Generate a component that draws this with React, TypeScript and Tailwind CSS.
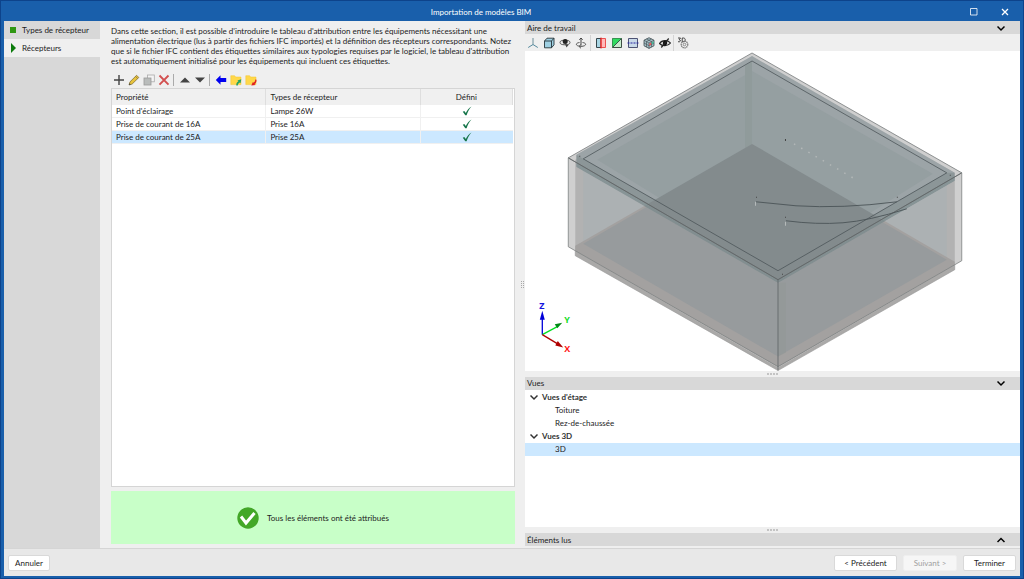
import { useState } from "react";
import type { ReactNode } from "react";

const PROPERTIES = [
  { name: "Point d'éclairage", type: "Lampe 26W" },
  { name: "Prise de courant de 16A", type: "Prise 16A" },
  { name: "Prise de courant de 25A", type: "Prise 25A" },
];

function Icon({ children }: { children: ReactNode }) {
  return (
    <svg viewBox="0 0 12 12" className="size-3" fill="none" aria-hidden="true">
      {children}
    </svg>
  );
}

function ToolButton({ label, compact = false, children }: { label: string; compact?: boolean; children: ReactNode }) {
  return (
    <button
      type="button"
      aria-label={label}
      className={`flex h-4 shrink-0 items-center justify-center ${compact ? "w-[15px]" : "w-4"}`}
    >
      <Icon>{children}</Icon>
    </button>
  );
}

function Folder() {
  return <path d="M.8 1.700h3.800l1 1.300h5.400v7.600H.8z" fill="#ffd84a" stroke="#f2c42e" strokeWidth=".5" />;
}

function EditToolbar() {
  return (
    <div className="flex h-4 items-center">
      <ToolButton compact label="Ajouter">
        <path d="M6 1v10M1 6h10" stroke="#444" strokeWidth="1.4" />
      </ToolButton>
      <ToolButton compact label="Modifier">
        <path d="M1 11l1-3.2L8.600 1.300l2.200 2.200L4.200 10z" fill="#e8c33c" stroke="#776429" strokeWidth=".7" />
        <path d="M1 11l.5-1.800 1.400 1.300z" fill="#444" />
        <path d="M7.500 2.400l2.200 2.200" stroke="#8a7540" strokeWidth=".8" />
      </ToolButton>
      <ToolButton compact label="Copier">
        <rect x="4.500" y="1" width="6.800" height="6.800" fill="#f4f4f4" stroke="#aaa" strokeWidth=".8" />
        <rect x="1" y="4" width="7" height="7" fill="#b9bcbb" stroke="#999" strokeWidth=".8" />
      </ToolButton>
      <ToolButton compact label="Supprimer">
        <path d="M1.500 1.500l9 9.200M10.500 1.500l-9 9.200" stroke="#d25050" strokeWidth="1.900" />
      </ToolButton>
      <span className="mr-[3px] ml-0.5 h-3 w-px bg-[#aaa]" />
      <ToolButton compact label="Monter">
        <path d="M1 8.500L6 3.500l5 5z" fill="#444" />
      </ToolButton>
      <ToolButton compact label="Descendre">
        <path d="M1 3.500h10l-5 5z" fill="#444" />
      </ToolButton>
      <span className="mr-[3px] ml-0.5 h-3 w-px bg-[#aaa]" />
      <ToolButton compact label="Attribuer">
        <path d="M.8 6l4.700-4.800v2.900h5.700v3.800H5.500v2.900z" fill="#0000f0" />
      </ToolButton>
      <ToolButton compact label="Importer">
        <Folder />
        <path d="M11.300 5.200L7.400 6.600l1 .7C6.800 8.300 6 9.700 6.300 11.500h1.500c0-1.400.6-2.300 1.900-3.100l.8.900z" fill="#21a366" />
      </ToolButton>
      <ToolButton compact label="Exporter">
        <Folder />
        <path d="M10.200 5.500l1.300.3c.1 2-.6 3.400-2 4.300l.8.900-4 .6 1.600-3.700.8.900c1.100-.8 1.600-1.800 1.500-3.300z" fill="#e02020" />
      </ToolButton>
    </div>
  );
}

function ViewToolbar() {
  return (
    <div className="flex h-[17px] shrink-0 items-center bg-[#efefef]">
      <ToolButton label="Axes">
        <path d="M6 1v6.500" stroke="#6d8f9a" />
        <path d="M6 7.500l-4.800 3M6 7.500l4.800 3" stroke="#54899d" />
      </ToolButton>
      <ToolButton label="Vue en perspective">
        <path d="M1.500 4L4 1.200h7v6.600L8.500 10.800h-7z" fill="#9fd0e2" stroke="#26343a" strokeWidth=".9" />
        <path d="M1.500 4h7v6.800M8.500 4L11 1.200" stroke="#26343a" strokeWidth=".9" />
      </ToolButton>
      <ToolButton label="Orbite">
        <ellipse cx="6" cy="5.500" rx="5" ry="2.300" stroke="#555" />
        <circle cx="6.200" cy="4.600" r="2.500" fill="#222" />
        <path d="M6 7l3.500 1-2 2.600z" fill="#444" />
      </ToolButton>
      <ToolButton label="Rotation">
        <path d="M6 1v7.500M4.300 2.700L6 1l1.700 1.700" stroke="#444" />
        <path d="M4.500 5.500C0 6 .2 9.200 6 9.400c5.800-.2 6-3.400 1.500-3.900M6 7.500L4 9.400 6 11.300" stroke="#555" />
      </ToolButton>
      <span className="mr-0.5 ml-px h-4 w-px bg-[#d4d4d4]" />
      <ToolButton label="Section">
        <path d="M1.500 1.500H6v9H1.500z" fill="#a9d6e4" stroke="#36464c" />
        <path d="M6 1.500h4.500v9H6z" fill="#ffb9b9" stroke="#ed5050" />
        <path d="M6 .5v11" stroke="#e51d1d" />
      </ToolButton>
      <ToolButton label="Surface">
        <path d="M1.500 1.500h9v9h-9z" fill="#c8eccd" stroke="#3e4f44" />
        <path d="M1.500 1.500h9l-9 9z" fill="#31db60" />
        <path d="M1.500 10.500l9-9" stroke="#37554a" />
      </ToolButton>
      <ToolButton label="Plan">
        <path d="M1.500 1.500h9v9h-9z" fill="#c9d9e9" stroke="#4d5374" />
        <path d="M.5 6h11" stroke="#2525a0" strokeDasharray="2 1" />
      </ToolButton>
      <ToolButton label="Maillage">
        <path d="M6 .7l5 2.500v5.600L6 11.400 1 8.800V3.200z" fill="#a4bec5" stroke="#3f4c50" strokeWidth=".8" />
        <path d="M1 3.200L6 6l5-2.800M6 6v5.400M3.500 1.900l5 2.700v5.500M8.500 1.900l-5 2.700v5.500M1 6l5 2.700L11 6" stroke="#3f4c50" strokeWidth=".6" />
        <path d="M6.300 6.600l1.900-1v2.200l-1.900 1z" fill="#e55" />
        <path d="M8.800 5.200l1.900-1v2.100l-1.900 1z" fill="#4b9" />
      </ToolButton>
      <ToolButton label="Masquer">
        <path d="M.5 6.500C3 2.700 9 2.700 11.500 6 9 9.500 3 9.500.5 6.500z" fill="#ddd" stroke="#222" strokeWidth="1.200" />
        <circle cx="6" cy="6" r="2.200" fill="#111" />
        <path d="M2.300 10.500l7.400-9" stroke="#222" strokeWidth="1.200" />
      </ToolButton>
      <span className="mr-px h-4 w-px bg-[#d4d4d4]" />
      <ToolButton label="Options 3D">
        <path d="M1 1h2.500L2.200 2.800c2.100.1 1.400 2.600-1.200 1.900M5.200 1h1.300c2.300 0 2.300 3.700 0 3.700H5.200z" stroke="#333" strokeWidth=".9" />
        <circle cx="7.500" cy="7.500" r="3.300" stroke="#777" strokeWidth="1.200" strokeDasharray="1.400 .5" />
        <circle cx="7.500" cy="7.500" r="1.300" stroke="#777" strokeWidth=".8" />
      </ToolButton>
    </div>
  );
}

function Scene() {
  return (
    <svg viewBox="525 51 495 320" className="size-full" role="img" aria-label="Modèle 3D du bâtiment">
      <defs>
        <clipPath id="roof">
          <path d="M752 56L955 173V181L778 283L576 167V155z" />
        </clipPath>
      </defs>
      <path d="M575 250L778 360L955 260V270L778 371L575 256z" fill="#aaa9a8" />
      <path d="M752 53L962 173V261L778 368L568 247V158z" fill="#cfcfcf" />
      <path d="M575 160L752 60L955 173V265L778 368L575 251z" fill="#b2b2b2" />
      <path d="M583 160L752 62L947 173V261L778 357L583 244z" fill="#acb1b3" />
      <path d="M575 246L752 144L955 262V265L778 367L575 251z" fill="#a3a1a0" />
      <path d="M583 244L752 146L947 260L778 357z" fill="#979b9d" />
      <path d="M778 283H786V353L778 357z" fill="#929796" opacity=".6" />
      <g clipPath="url(#roof)">
        <path d="M560 50h410v240H560z" fill="#9ca4a7" />
        <path d="M752 71L933 174L778 271L597 160z" fill="#959fa1" />
        <path d="M745 66L752 61V144L745 149z" fill="#909b9b" />
        <path d="M576 155L583 159L778 271L947 173L955 173V181L778 283L576 167z" fill="#8c9698" />
        <path d="M575 246L752 144L955 262L778 367z" fill="#838b8d" />
        <path d="M576 163L778 280L955 177V181L778 284L576 168z" fill="#829194" opacity=".5" />
      </g>
      <g fill="none" stroke="#5e6365" strokeWidth=".8">
        <path d="M752 53L962 173L778 280L568 158z" stroke="#777b7c" />
        <path d="M568 158L778 280L962 173" />
        <path d="M752 61L947 173L778 271L583 159z" stroke="#4d5659" />
        <path d="M568 158V247L778 367L962 261V173" stroke="#7e8182" />
        <path d="M778 280V371" />
        <path d="M575 251V256L778 371L955 270V265" stroke="#999" strokeWidth=".6" />
      </g>
      <g fill="none" stroke="#4b5457" strokeWidth=".9">
        <path d="M756 202L796 206Q842 209 897 202" />
        <path d="M786 221Q817 225 843 223T907 209" />
        <path d="M755.500 202v4M785.500 222v4" stroke="#bbc0c0" />
      </g>
      <path d="M785 139h1v2h-1zM756 197h1v1h-1zM785 217h1v1h-1zM897 197h1v1h-1zM579 156h1v1h-1zM950 175h1v1h-1zM782 274h1v1h-1z" fill="#444" />
      <path d="M794 144L853 178" stroke="#b3b8b8" strokeWidth="1.500" strokeDasharray="1.500 6.800" />
      <g strokeWidth="1.300">
        <path d="M542 335V317" stroke="#0000d8" />
        <path d="M539.500 320L542 311l2.500 9z" fill="#0000d8" />
        <path d="M542 335L557 327" stroke="#00e020" />
        <path d="M554.500 324.500L562 323l-5 5.500z" fill="#008a16" />
        <path d="M542 335L557 344" stroke="#b00000" />
        <path d="M557.500 341.500L563 348l-8-2z" fill="#b00000" />
      </g>
      <g fontFamily="Open Sans, sans-serif" fontSize="9" fontWeight="700">
        <text x="539" y="309" fill="#1515e0">Z</text>
        <text x="564" y="323" fill="#13dd1f">Y</text>
        <text x="564" y="352" fill="#ff1515">X</text>
      </g>
    </svg>
  );
}

function Chevron({ up = false, className }: { up?: boolean; className: string }) {
  return (
    <svg viewBox="0 0 8 8" className={className} fill="none" stroke="currentColor" aria-hidden="true">
      <path d={up ? "M.5 6L4 2.500l3.500 3.500" : "M.5 2.500L4 6l3.500-3.500"} strokeWidth="1.500" />
    </svg>
  );
}

function PanelHeader({ title, open, onToggle }: { title: string; open: boolean; onToggle: () => void }) {
  return (
    <button
      type="button"
      aria-expanded={open}
      onClick={onToggle}
      className="flex h-[13px] w-full shrink-0 items-center justify-between bg-[#d8d8d8] pr-[15px] pl-0.5 text-left"
    >
      {title}
      <Chevron up={!open} className="size-2 text-black" />
    </button>
  );
}

function Grip() {
  return (
    <div className="flex h-1.5 shrink-0 items-center justify-center gap-px">
      {[0, 1, 2, 3].map((dot) => (
        <span key={dot} className="size-0.5 bg-[#c4c4c4]" />
      ))}
    </div>
  );
}

function TreeGroup({ title, children }: { title: string; children: ReactNode }) {
  const [open, setOpen] = useState(true);
  return (
    <li>
      <button
        type="button"
        aria-expanded={open}
        onClick={() => setOpen(!open)}
        className="flex h-[13px] w-full items-center gap-1 pl-[5px] font-bold text-[#333]"
      >
        <Chevron up={!open} className="size-2" />
        {title}
      </button>
      {open && <ul>{children}</ul>}
    </li>
  );
}

function TreeItem({ selected = false, children }: { selected?: boolean; children: ReactNode }) {
  return (
    <li className={selected ? "bg-[#cce8ff]" : ""}>
      <button type="button" className="flex h-[13px] w-full items-center pl-[30px]">
        {children}
      </button>
    </li>
  );
}

function PropertyTable() {
  return (
    <div className="min-h-0 flex-1 border border-[#d5d5d5] bg-white pr-px">
      <table className="w-full table-fixed border-separate border-spacing-0 text-left">
        <thead>
          <tr className="h-4 bg-[#f0f0f0]">
            <th className="w-[38.5%] border-r border-[#dedede] px-1 py-0 font-normal">Propriété</th>
            <th className="w-[38.5%] border-r border-[#dedede] px-1 py-0 font-normal">Types de récepteur</th>
            <th className="border-r border-[#dedede] px-1 py-0 text-center font-normal">Défini</th>
          </tr>
        </thead>
        <tbody>
          {PROPERTIES.map((row, i) => (
            <tr key={row.name} className={i === 2 ? "h-[13px] bg-[#cce8ff]" : "h-[13px]"}>
              <td className="border-r border-b border-[#f0f0f0] px-1 py-0">{row.name}</td>
              <td className="border-r border-b border-[#f0f0f0] px-1 py-0">{row.type}</td>
              <td className="border-b border-[#f0f0f0] px-1 py-0">
                <svg viewBox="0 0 10 10" className="mx-auto size-2.5" role="img" aria-label="Oui">
                  <path d="M.8 5.800l1.500-.8 1.500 2C5.300 4 6.800 2 9.500.5 7 3.300 5.600 6 4.600 9.200H3.300z" fill="#16754a" />
                </svg>
              </td>
            </tr>
          ))}
        </tbody>
      </table>
    </div>
  );
}

const FOOTER_BUTTON = "h-4 rounded-xs border border-[#d9d9d9] bg-white text-center disabled:border-[#efefef] disabled:bg-[#f6f6f6] disabled:text-[#a0a0a0]";

export default function App() {
  const [workspace, setWorkspace] = useState(true);
  const [views, setViews] = useState(true);
  const [elements, setElements] = useState(false);

  return (
    <div className="flex h-screen flex-col border border-[#0d438b] bg-[#195fab] px-[3px] pb-0.5 font-['Lato','Noto_Sans',sans-serif] text-[8px] leading-[10px] text-[#1c1c1c]">
      <header className="flex h-5 shrink-0 items-center text-white">
        <h1 className="flex-1 pt-0.5 text-center">Importation de modèles BIM</h1>
        <button type="button" aria-label="Agrandir" className="flex h-full w-[31px] items-center justify-center pt-0.5">
          <svg viewBox="0 0 8 8" className="size-2" fill="none" stroke="currentColor">
            <path d="M.5.5h6.500v6.500H.5z" strokeWidth=".8" />
          </svg>
        </button>
        <button type="button" aria-label="Fermer" className="flex h-full w-[31px] items-center justify-center pt-0.5">
          <svg viewBox="0 0 8 8" className="size-2" fill="none" stroke="currentColor">
            <path d="M1 1l6 6M7 1L1 7" strokeWidth="1.300" />
          </svg>
        </button>
      </header>

      <main className="grid min-h-0 flex-1 grid-cols-[96px_minmax(0,415fr)_10px_minmax(0,495fr)] grid-rows-[minmax(0,1fr)] bg-[#efefef]">
        <nav className="bg-[#d8d8d8]">
          <a href="#types" className="flex h-[18px] items-center gap-1.5 pl-1.5">
            <svg viewBox="0 0 6 10" className="h-2.5 w-1.5" aria-hidden="true">
              <path d="M0 2h6v6H0z" fill="#2f9712" />
            </svg>
            Types de récepteur
          </a>
          <a href="#recepteurs" aria-current="step" className="flex h-[18px] items-center gap-1.5 bg-[#efefef] pl-1.5">
            <svg viewBox="0 0 6 10" className="h-2.5 w-1.5" aria-hidden="true">
              <path d="M1 0l5 5-5 5z" fill="#0b7a0b" />
            </svg>
            Récepteurs
          </a>
        </nav>

        <section className="flex min-h-0 flex-col pt-[5px] pb-1 pl-[11px]">
          <p>
            Dans cette section, il est possible d'introduire le tableau d'attribution entre les équipements nécessitant une
            alimentation électrique (lus à partir des fichiers IFC importés) et la définition des récepteurs correspondants. Notez
            que si le fichier IFC contient des étiquettes similaires aux typologies requises par le logiciel, le tableau
            d'attribution est automatiquement initialisé pour les équipements qui incluent ces étiquettes.
          </p>
          <div className="pt-1.5">
            <EditToolbar />
          </div>
          <PropertyTable />
          <div className="mt-1 flex h-[53px] shrink-0 items-center justify-center gap-2 bg-[#c8ffc8]">
            <svg viewBox="0 0 22 22" className="size-[22px]" aria-hidden="true">
              <circle cx="11" cy="11" r="10.700" fill="#43a728" />
              <path d="M4 9.500l5 6.500L17.500 6" fill="none" stroke="#fff" strokeWidth="3" />
            </svg>
            <p>Tous les éléments ont été attribués</p>
          </div>
        </section>

        <div className="flex items-center justify-center pl-1">
          <div className="grid grid-cols-2 gap-px">
            {[0, 1, 2, 3, 4, 5, 6, 7].map((dot) => (
              <span key={dot} className="size-px bg-[#a8a8a8]" />
            ))}
          </div>
        </div>

        <section className="flex min-h-0 flex-col pb-0.5">
          <PanelHeader title="Aire de travail" open={workspace} onToggle={() => setWorkspace(!workspace)} />
          {workspace && (
            <div className="flex min-h-0 flex-[338] flex-col">
              <ViewToolbar />
              <div className="min-h-0 flex-1 bg-white">
                <Scene />
              </div>
            </div>
          )}
          <Grip />
          <PanelHeader title="Vues" open={views} onToggle={() => setViews(!views)} />
          {views && (
            <ul className="min-h-0 flex-[136] bg-white py-px">
              <TreeGroup title="Vues d'étage">
                <TreeItem>Toiture</TreeItem>
                <TreeItem>Rez-de-chaussée</TreeItem>
              </TreeGroup>
              <TreeGroup title="Vues 3D">
                <TreeItem selected>3D</TreeItem>
              </TreeGroup>
            </ul>
          )}
          <Grip />
          <PanelHeader title="Éléments lus" open={elements} onToggle={() => setElements(!elements)} />
        </section>
      </main>

      <footer className="flex h-7 shrink-0 items-center gap-1.5 border-t border-[#d5d5d5] bg-[#e8e8e8] px-1">
        <button type="button" className={`${FOOTER_BUTTON} mr-auto w-[42px]`}>
          Annuler
        </button>
        <button type="button" className={`${FOOTER_BUTTON} w-[63px]`}>
          &lt; Précédent
        </button>
        <button type="button" disabled className={`${FOOTER_BUTTON} w-[54px]`}>
          Suivant &gt;
        </button>
        <button type="button" className={`${FOOTER_BUTTON} w-[53px]`}>
          Terminer
        </button>
      </footer>
    </div>
  );
}
